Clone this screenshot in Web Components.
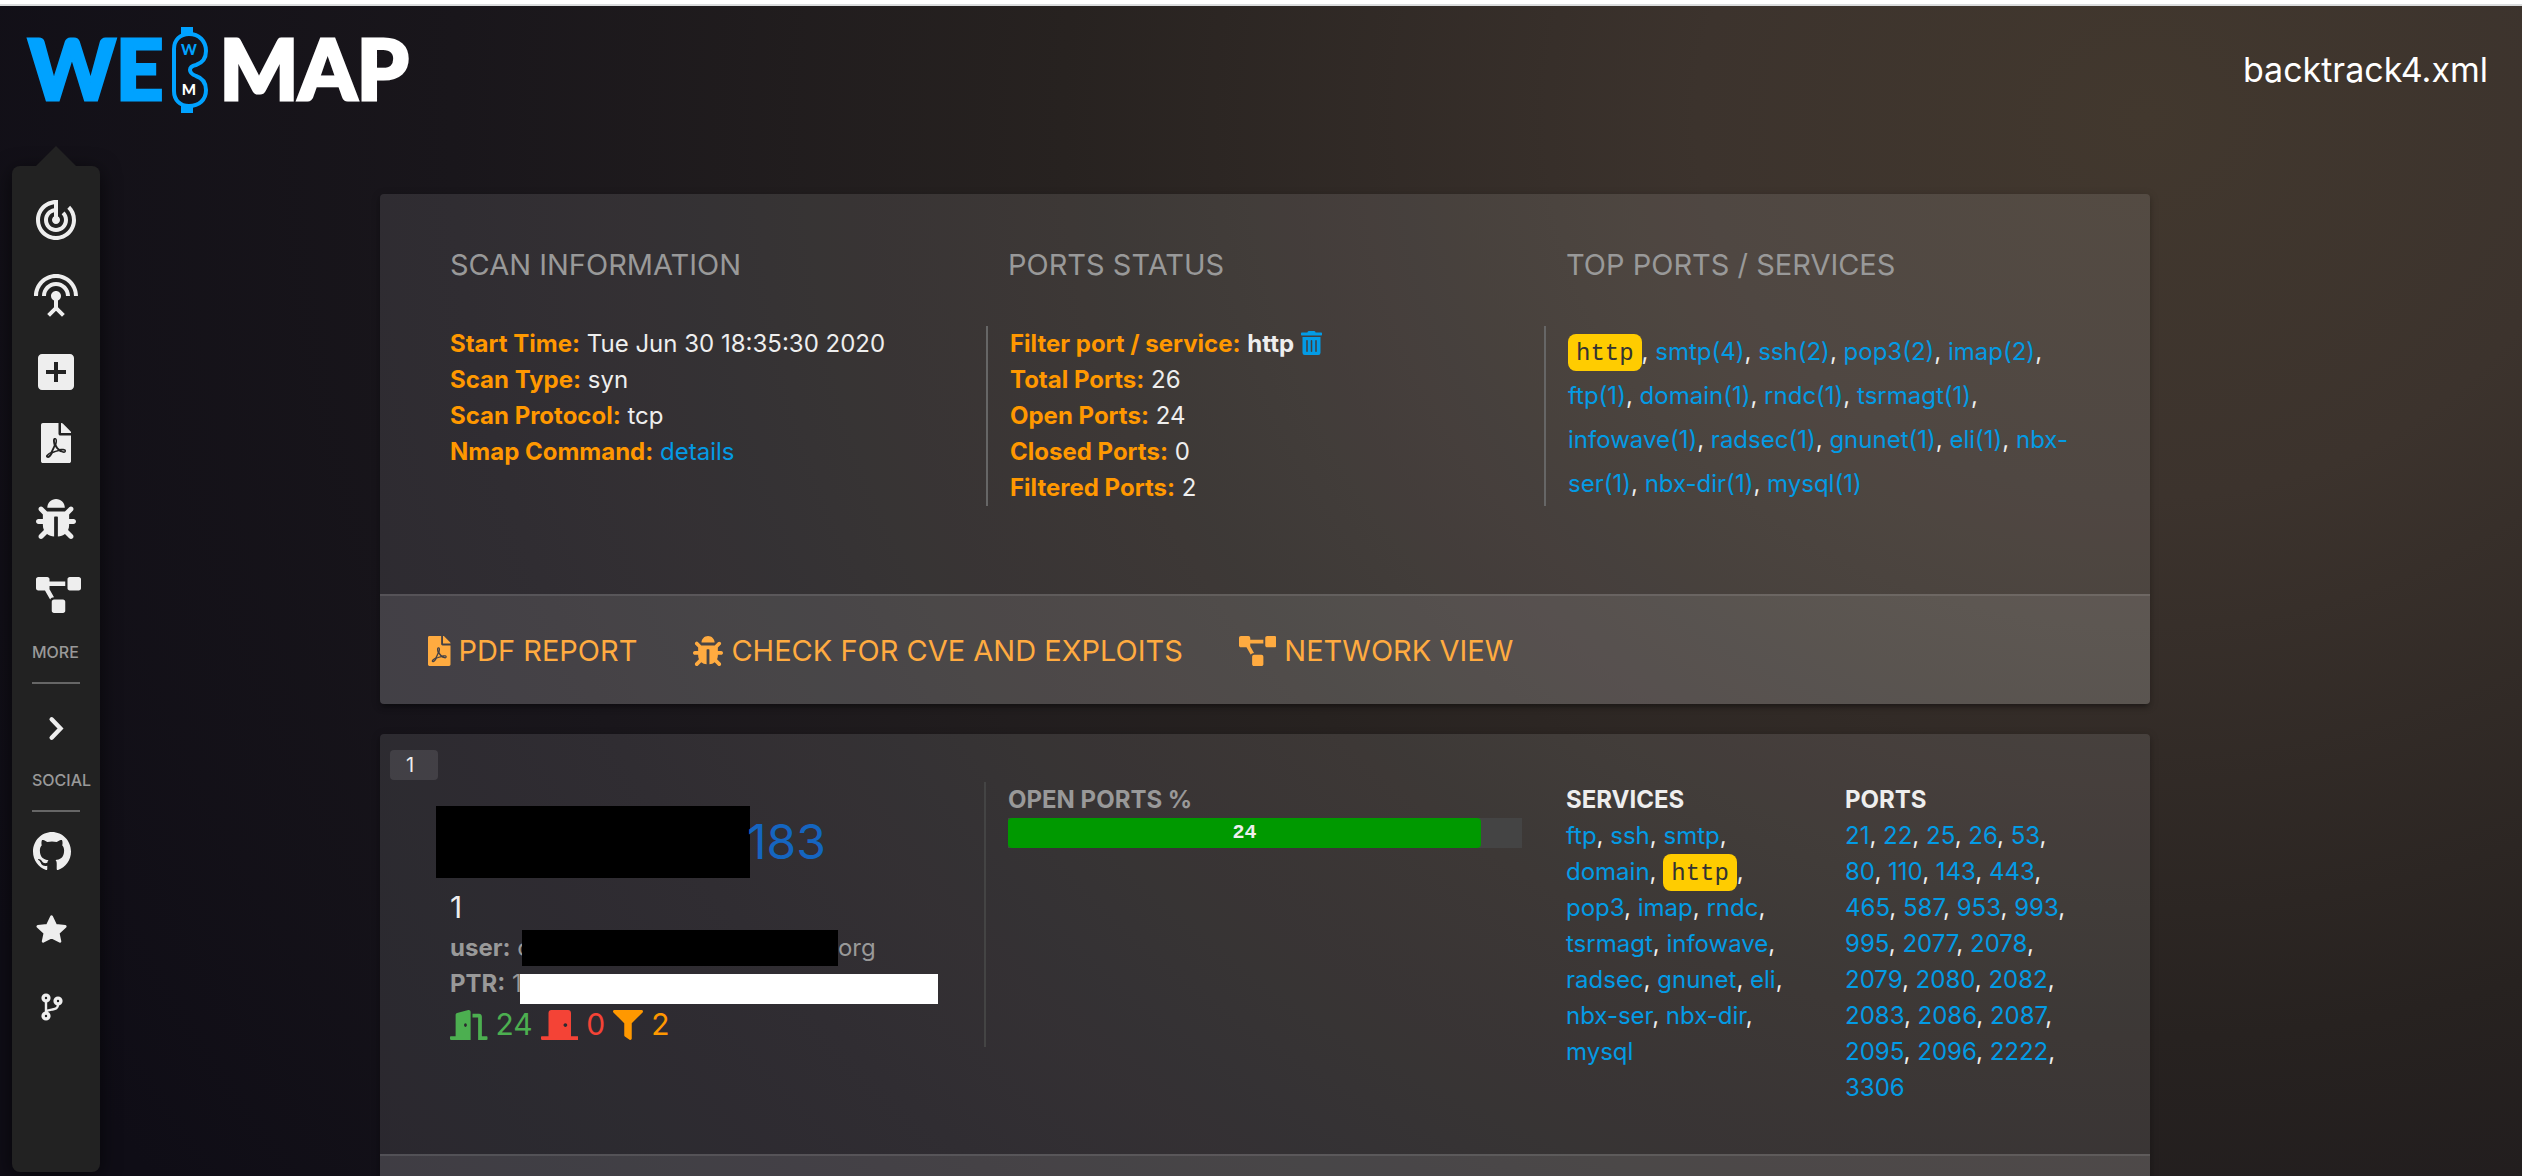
<!DOCTYPE html>
<html lang="en">
<head>
<meta charset="utf-8">
<title>WebMap</title>
<style>
  html, body { margin: 0; }
  body {
    height: 100vh; overflow: hidden;
    font: 24px/36px Inter, "Liberation Sans", sans-serif; color: #eee;
    --link: #039be5; --muted: #999; --accent: #ff9800; --action: #ffab40;
    --veil: rgba(255,255,255,.1);
  }
</style>
</head>
<body>
<wm-app></wm-app>
<script>
const ICONS = {
  track: ['0 0 24 24', '<path d="M19.07 4.93l-1.41 1.41C19.1 7.79 20 9.79 20 12c0 4.42-3.58 8-8 8s-8-3.58-8-8c0-4.08 3.05-7.44 7-7.93v2.02C8.16 6.57 6 9.03 6 12c0 3.31 2.69 6 6 6s6-2.69 6-6c0-1.66-.67-3.16-1.76-4.24l-1.41 1.41C15.55 9.9 16 10.9 16 12c0 2.21-1.79 4-4 4s-4-1.79-4-4c0-1.86 1.28-3.41 3-3.86v2.14c-.6.35-1 .98-1 1.72 0 1.1.9 2 2 2s2-.9 2-2c0-.74-.4-1.38-1-1.72V2h-1C6.48 2 2 6.48 2 12s4.48 10 10 10 10-4.48 10-10c0-2.76-1.12-5.26-2.93-7.07z"/>'],
  antenna: ['0 0 24 24', '<path d="M12 5c-3.87 0-7 3.13-7 7h2c0-2.76 2.24-5 5-5s5 2.24 5 5h2c0-3.87-3.13-7-7-7zm1 9.29c.88-.39 1.5-1.26 1.5-2.29 0-1.38-1.12-2.5-2.5-2.5S9.5 10.62 9.5 12c0 1.02.62 1.9 1.5 2.29v3.3L7.59 21 9 22.41l3-3 3 3L16.41 21 13 17.59v-3.3zM12 1C5.93 1 1 5.93 1 12h2c0-4.97 4.03-9 9-9s9 4.03 9 9h2c0-6.07-4.93-11-11-11z"/>'],
  add: ['0 0 24 24', '<path d="M19 3H5c-1.11 0-2 .9-2 2v14c0 1.1.89 2 2 2h14c1.1 0 2-.9 2-2V5c0-1.1-.9-2-2-2zm-2 10h-4v4h-2v-4H7v-2h4V7h2v4h4v2z"/>'],
  pdf: ['0 0 384 512', '<path d="M181.9 256.1c-5-16-4.9-46.9-2-46.9 8.4 0 7.6 36.9 2 46.9zm-1.7 47.2c-7.7 20.2-17.3 43.3-28.4 62.7 18.3-7 39-17.2 62.9-21.9-12.7-9.6-24.9-23.4-34.5-40.8zM86.1 428.1c0 .8 13.2-5.4 34.9-40.2-6.7 6.3-29.1 24.5-34.9 40.2zM248 160h136v328c0 13.3-10.7 24-24 24H24c-13.3 0-24-10.7-24-24V24C0 10.7 10.7 0 24 0h200v136c0 13.2 10.8 24 24 24zm-8 171.8c-20-12.2-33.3-29-42.7-53.8 4.5-18.5 11.6-46.6 6.2-64.2-4.7-29.4-42.4-26.5-47.8-6.8-5 18.3-.4 44.1 8.1 77-11.6 27.6-28.7 64.6-40.8 85.8-.1 0-.1.1-.2.1-27.1 13.9-73.6 44.5-54.5 68 5.6 6.9 16 10 21.5 10 17.9 0 35.7-18 61.1-61.8 25.8-8.5 54.1-19.1 79-23.2 21.7 11.8 47.1 19.5 64 19.5 29.2 0 31.2-32 19.7-43.4-13.9-13.6-54.3-9.7-73.6-7.2zM377 105L279 7c-4.5-4.5-10.6-7-17-7h-6v128h128v-6.1c0-6.3-2.5-12.4-7-16.9zm-74.1 255.3c4.1-2.7-2.5-11.9-42.8-9 37.1 15.8 42.8 9 42.8 9z"/>'],
  bug: ['0 0 512 512', '<path d="M511.988 288.9c-.478 17.43-15.217 31.1-32.653 31.1H424v16c0 21.864-4.882 42.584-13.6 61.145l60.228 60.228c12.496 12.497 12.496 32.758 0 45.255-12.498 12.497-32.759 12.496-45.256 0l-54.736-54.736C345.886 467.965 314.351 480 280 480V236c0-6.627-5.373-12-12-12h-24c-6.627 0-12 5.373-12 12v244c-34.351 0-65.886-12.035-90.636-32.108l-54.736 54.736c-12.498 12.497-32.759 12.496-45.256 0-12.496-12.497-12.496-32.758 0-45.255l60.228-60.228C92.882 378.584 88 357.864 88 336v-16H32.666C15.23 320 .491 306.33.013 288.9-.484 270.816 14.028 256 32 256h56v-58.745l-46.628-46.628c-12.496-12.497-12.496-32.758 0-45.255 12.498-12.497 32.758-12.497 45.256 0L141.255 160h229.489l54.627-54.627c12.498-12.497 32.758-12.497 45.256 0 12.496 12.497 12.496 32.758 0 45.255L424 197.255V256h56c17.972 0 32.484 14.816 31.988 32.9zM257 0c-61.856 0-112 50.144-112 112h224C369 50.144 318.856 0 257 0z"/>'],
  diagram: ['0 0 640 512', '<path d="M384 320H256c-17.67 0-32 14.33-32 32v128c0 17.67 14.33 32 32 32h128c17.67 0 32-14.33 32-32V352c0-17.67-14.33-32-32-32zM192 32c0-17.67-14.33-32-32-32H32C14.33 0 0 14.33 0 32v128c0 17.67 14.33 32 32 32h95.72l73.16 128.04C211.98 300.98 232.4 288 256 288h.28L192 175.51V128h224V64H192V32zM608 0H480c-17.67 0-32 14.33-32 32v128c0 17.67 14.33 32 32 32h128c17.67 0 32-14.33 32-32V32c0-17.67-14.33-32-32-32z"/>'],
  chevron: ['0 0 16 24', '<path d="M3.5 3.2L12 12l-8.500 8.800" fill="none" stroke="currentColor" stroke-width="4.200" stroke-linecap="round"/>'],
  github: ['32 32 448 448', '<path d="M256 32C132.300 32 32 134.900 32 261.700c0 101.500 64.200 187.500 153.200 217.900a17.560 17.560 0 003.800.4c8.300 0 11.500-6.100 11.500-11.400 0-5.500-.2-19.900-.3-39.100a102.400 102.400 0 01-22.600 2.700c-43.100 0-52.900-33.500-52.900-33.500-10.200-26.500-24.900-33.600-24.900-33.600-19.500-13.700-.1-14.100 1.400-14.100h.1c22.500 2 34.300 23.800 34.300 23.800 11.200 19.600 26.200 25.100 39.600 25.100a63 63 0 0025.600-6c2-14.800 7.800-24.900 14.200-30.700-49.700-5.800-102-25.500-102-113.500 0-25.100 8.700-45.600 23-61.600-2.300-5.800-10-29.200 2.200-60.800a18.640 18.640 0 015-.5c8.100 0 26.400 3.100 56.600 24.100a208.210 208.210 0 01112.200 0c30.200-21 48.500-24.100 56.600-24.100a18.640 18.640 0 015 .5c12.200 31.600 4.500 55 2.200 60.800 14.300 16.100 23 36.600 23 61.600 0 88.200-52.400 107.600-102.300 113.300 8 7.100 15.200 21.100 15.200 42.500 0 30.700-.3 55.500-.3 63 0 5.400 3.100 11.500 11.400 11.500a19.350 19.350 0 004-.4C415.900 449.200 480 363.100 480 261.700 480 134.900 379.700 32 256 32z"/>'],
  star: ['0 0 30 27', '<path d="M15 1.600l4 8.300 9.200 1.100-6.800 6.400 1.700 8-8.100-4.100-8.100 4.100 1.700-8L1.800 11l9.200-1.100z" stroke="currentColor" stroke-width="2.600" stroke-linejoin="round"/>'],
  branch: ['0 0 22 28', '<g fill="none" stroke="currentColor" stroke-width="3.400"><circle cx="5" cy="5" r="2.900"/><circle cx="5" cy="23" r="2.900"/><circle cx="17" cy="8" r="2.900"/></g><path d="M5 8v12M17 11.500c0 4-2.500 4.500-5.500 5S6 17.300 5 18.500" fill="none" stroke="currentColor" stroke-width="2.400"/>'],
  trash: ['0 0 448 512', '<path d="M32 464a48 48 0 0 0 48 48h288a48 48 0 0 0 48-48V128H32zm272-256a16 16 0 0 1 32 0v224a16 16 0 0 1-32 0zm-96 0a16 16 0 0 1 32 0v224a16 16 0 0 1-32 0zm-96 0a16 16 0 0 1 32 0v224a16 16 0 0 1-32 0zM432 32H312l-9.400-18.700A24 24 0 0 0 281.100 0H166.800a23.720 23.720 0 0 0-21.400 13.300L136 32H16A16 16 0 0 0 0 48v32a16 16 0 0 0 16 16h416a16 16 0 0 0 16-16V48a16 16 0 0 0-16-16z"/>'],
  open: ['0 0 640 512', '<path d="M624 448h-80V113.450C544 86.190 522.470 64 496 64H384v64h96v384h144c8.840 0 16-7.160 16-16v-32c0-8.840-7.160-16-16-16zM312.240 1.010l-192 49.740C105.990 54.440 96 67.700 96 82.920V448H16c-8.840 0-16 7.160-16 16v32c0 8.840 7.160 16 16 16h336V33.180c0-21.580-19.560-37.410-39.760-32.170zM264 288c-13.250 0-24-14.330-24-32s10.750-32 24-32 24 14.330 24 32-10.750 32-24 32z"/>'],
  closed: ['0 0 640 512', '<path d="M624 448H512V50.800C512 22.780 490.470 0 464 0H175.990c-26.470 0-48 22.780-48 50.800V448H16c-8.840 0-16 7.160-16 16v32c0 8.840 7.160 16 16 16h608c8.840 0 16-7.160 16-16v-32c0-8.840-7.160-16-16-16zM415.990 288c-17.670 0-32-14.330-32-32s14.330-32 32-32 32 14.330 32 32c.01 17.670-14.320 32-32 32z"/>'],
  filter: ['0 0 512 512', '<path d="M487.976 0H24.028C2.710 0-8.047 25.866 7.058 40.971L192 225.941V432c0 7.831 3.821 15.170 10.237 19.662l80 55.980C298.020 518.690 320 507.493 320 487.980V225.941l184.947-184.970C520.021 25.896 509.338 0 487.976 0z"/>']
};

const define = (name, render) => customElements.define(name, class extends HTMLElement {
  connectedCallback() {
    if (this.shadowRoot) return;
    this.attachShadow({ mode: 'open' }).innerHTML = render(this);
  }
});

define('wm-icon', el => {
  const [box, body] = ICONS[el.getAttribute('name')];
  return `<style>
    :host { display: inline-block; line-height: 0; flex: none; }
    svg { display: block; height: ${el.getAttribute('size')}px; fill: currentColor; }
  </style><svg viewBox="${box}" aria-hidden="true">${body}</svg>`;
});

define('wm-logo', () => `<style>
    :host { display: flex; align-items: flex-start; height: 86px; font: 900 83px/82px "Lato Black", Lato, sans-serif; color: #fff; }
    span { -webkit-text-stroke: 3px currentColor; }
    .web { color: #00a2ff; }
    svg { height: 86px; margin: 0 11px 0 9px; }
    text { font: 900 15px "Lato Black", Lato, sans-serif; text-anchor: middle; }
  </style>
  <span class="web">WE</span>
  <svg viewBox="0 0 36 86" aria-hidden="true">
    <path d="M9 0h12v8H9zM9 78h12v8H9z" fill="#00a2ff"/>
    <path d="M2 22C2 13 8 7 17 7c10 0 17 7 17 17 0 7-4 12-10 14-5 1-6 3-6 5s1 4 6 6c6 2 10 7 10 14 0 10-7 16-17 16C8 79 2 73 2 64z" fill="none" stroke="#00a2ff" stroke-width="4"/>
    <text x="17" y="28" fill="#00a2ff">W</text>
    <text x="17" y="68" fill="#fff">M</text>
  </svg>
  <span>MAP</span>`);

define('wm-header', () => `<style>
    :host { display: flex; justify-content: space-between; align-items: center;
      box-sizing: border-box; height: 146px; padding: 0 34px 10px 28px;
      border-top: 4px solid #fff; box-shadow: inset 0 2px #dadcdd; }
    h1 { margin: 0; font-size: 34px; line-height: 36px; font-weight: 400; color: #fff; }
  </style><wm-logo></wm-logo><h1><slot></slot></h1>`);

define('wm-sidebar', () => `<style>
    :host { display: flex; flex-direction: column; position: relative; width: 88px; box-sizing: border-box;
      margin: 20px 0 4px 12px; padding-top: 16px; background: #222; border-radius: 8px;
      box-shadow: 0 4px 20px rgba(0,0,0,.6); color: #eee; }
    :host::before { content: ""; position: absolute; left: 24px; top: -20px;
      border: 20px solid transparent; border-top: 0; border-bottom-color: #222; }
    nav { display: flex; flex-direction: column; }
    a { display: flex; align-items: center; justify-content: center; height: 76px; color: inherit; }
    .tools { margin-top: -5px; }
    .tools a:last-child { padding-left: 5px; }
    .more { padding-top: 11px; }
    .more a { height: 66px; }
    .social { padding-right: 8px; }
    .social a { height: 78px; }
    h2 { margin: 2px 20px 0; font-size: 16px; line-height: 34px; font-weight: 500; color: var(--muted); }
    hr { margin: 13px 20px 0; border: 0; height: 2px; background: #666; }
  </style>
  <nav>
    <a href="#" aria-label="Scans"><wm-icon name="track" size="48"></wm-icon></a>
    <a href="#" aria-label="Hosts"><wm-icon name="antenna" size="48"></wm-icon></a>
    <a href="#" aria-label="New scan"><wm-icon name="add" size="48"></wm-icon></a>
  </nav>
  <nav class="tools">
    <a href="#" aria-label="PDF report"><wm-icon name="pdf" size="40"></wm-icon></a>
    <a href="#" aria-label="Check CVE"><wm-icon name="bug" size="40"></wm-icon></a>
    <a href="#" aria-label="Network view"><wm-icon name="diagram" size="36"></wm-icon></a>
  </nav>
  <h2>MORE</h2><hr>
  <nav class="more"><a href="#" aria-label="Expand"><wm-icon name="chevron" size="25"></wm-icon></a></nav>
  <h2>SOCIAL</h2><hr>
  <nav class="social">
    <a href="#" aria-label="GitHub"><wm-icon name="github" size="38"></wm-icon></a>
    <a href="#" aria-label="Star"><wm-icon name="star" size="28"></wm-icon></a>
    <a href="#" aria-label="Fork"><wm-icon name="branch" size="28"></wm-icon></a>
  </nav>`);

define('wm-card', () => `<style>
    :host { display: block; position: relative; background: var(--veil); border-radius: 4px;
      box-shadow: 0 4px 4px rgba(0,0,0,.14), 0 6px 2px -4px rgba(0,0,0,.12), 0 2px 10px rgba(0,0,0,.2); }
    .content { display: grid; grid-template-columns: repeat(6, 1fr); padding: 48px; }
    footer { display: flex; gap: 56px; box-sizing: border-box; min-height: 110px; padding: 33px 48px 31px;
      border-top: 2px solid var(--veil); background: var(--veil); border-radius: 0 0 4px 4px; }
  </style>
  <slot name="badge"></slot>
  <div class="content"><slot></slot></div>
  <footer><slot name="action"></slot></footer>`);

define('wm-action', el => `<style>
    :host { display: block; }
    a { display: flex; align-items: center; gap: 8px; color: var(--action); text-decoration: none;
      font-size: 29px; line-height: 44px; text-transform: uppercase; white-space: nowrap; }
  </style><a href="#"><wm-icon name="${el.getAttribute('icon')}" size="30"></wm-icon><slot></slot></a>`);

define('wm-panel', el => `<style>
    :host { display: block; grid-column: span 2; }
    h2 { margin: 0 22px 38px; font-size: 29px; line-height: 46px; font-weight: 400; color: var(--muted); }
    div { padding: 0 22px; }
    :host([ruled]) div { border-left: 2px solid #666; }
    :host([spread]) div { line-height: 44px; padding-top: 4px; }
  </style><h2>${el.getAttribute('heading')}</h2><div><slot></slot></div>`);

define('wm-field', el => `<style>
    :host { display: block; }
    b { color: var(--accent); }
  </style><b>${el.getAttribute('label')}:</b> <slot></slot>`);

define('wm-links', el => `<style>
    :host { display: block; }
    a { color: var(--link); text-decoration: none; }
    .on { padding: 6px 8px 4px; border-radius: 8px; background: #fc0; color: #333;
      font-family: "Liberation Mono", monospace; line-height: 24px; }
  </style>${el.getAttribute('items').split(' ').map(t =>
    `<a href="#"${t === 'http' ? ' class="on"' : ''}>${t}</a>`).join(', ')}`);

define('wm-scan', () => `<style>
    :host { display: block; }
    a { color: var(--link); text-decoration: none; }
    wm-icon { vertical-align: -3px; }
    .body { min-height: 304px; }
  </style>
  <wm-card>
    <wm-panel class="body" heading="SCAN INFORMATION">
      <wm-field label="Start Time">Tue Jun 30 18:35:30 2020</wm-field>
      <wm-field label="Scan Type">syn</wm-field>
      <wm-field label="Scan Protocol">tcp</wm-field>
      <wm-field label="Nmap Command"><a href="#">details</a></wm-field>
    </wm-panel>
    <wm-panel ruled heading="PORTS STATUS">
      <wm-field label="Filter port / service"><b>http</b> <a href="#" aria-label="Remove filter"><wm-icon name="trash" size="24"></wm-icon></a></wm-field>
      <wm-field label="Total Ports">26</wm-field>
      <wm-field label="Open Ports">24</wm-field>
      <wm-field label="Closed Ports">0</wm-field>
      <wm-field label="Filtered Ports">2</wm-field>
    </wm-panel>
    <wm-panel ruled spread heading="TOP PORTS / SERVICES">
      <wm-links items="http smtp(4) ssh(2) pop3(2) imap(2) ftp(1) domain(1) rndc(1) tsrmagt(1) infowave(1) radsec(1) gnunet(1) eli(1) nbx-ser(1) nbx-dir(1) mysql(1)"></wm-links>
    </wm-panel>
    <wm-action slot="action" icon="pdf">PDF report</wm-action>
    <wm-action slot="action" icon="bug">Check for CVE and exploits</wm-action>
    <wm-action slot="action" icon="diagram">Network view</wm-action>
  </wm-card>`);

define('wm-meter', el => `<style>
    :host { display: block; color: var(--muted); }
    .track { height: 30px; background: #444; }
    .fill { width: ${el.getAttribute('percent')}%; height: 30px; border-radius: 4px; background: #090;
      color: #eee; text-align: center; font: bold 20px/30px "Liberation Mono", monospace; }
  </style><b><slot></slot></b><div class="track"><div class="fill">${el.getAttribute('value')}</div></div>`);

define('wm-host', () => `<style>
    :host { display: block; }
    .badge { position: absolute; left: 10px; top: 16px; box-sizing: border-box; width: 48px; padding-left: 16px;
      border-radius: 4px; background: var(--veil); font-size: 20px; line-height: 30px; }
    .who { grid-column: span 2; align-self: start; box-sizing: border-box; padding: 24px 22px 0; border-right: 2px solid #444; }
    .half { grid-column: span 2; padding: 0 22px; }
    .col { padding: 0 22px; min-height: 324px; }
    .row { display: flex; color: var(--muted); white-space: pre; }
    .address { align-items: center; margin: 0 0 7px -14px; height: 72px; font-size: 48px; }
    .address a { margin-left: -3px; color: #1565c0; text-decoration: none; }
    .count { font-size: 30px; line-height: 45px; }
    .mask { background: #000; }
    .m1 { width: 314px; height: 72px; }
    .m2 { width: 316px; height: 36px; margin-left: -9px; }
    .m3 { width: 418px; height: 30px; background: #fff; align-self: flex-end; margin: 0 0 -2px -2px; }
    .totals { align-items: center; gap: 8px; }
  </style>
  <wm-card>
    <span class="badge" slot="badge">1</span>
    <div class="who">
      <div class="row address"><span class="mask m1"></span><a href="#">183</a></div>
      <div class="count">1</div>
      <div class="row"><b>user:</b> c<span class="mask m2"></span>org</div>
      <div class="row"><b>PTR:</b> 1<span class="mask m3"></span></div>
      <div class="row count totals">
        <wm-icon name="open" size="30" style="color:#4caf50"></wm-icon><span style="color:#4caf50">24</span>
        <wm-icon name="closed" size="30" style="color:#f44336"></wm-icon><span style="color:#f44336">0</span>
        <wm-icon name="filter" size="30" style="color:#ff9800"></wm-icon><span style="color:#ff9800">2</span>
      </div>
    </div>
    <div class="half"><wm-meter percent="92" value="24">OPEN PORTS %</wm-meter></div>
    <div class="col"><b>SERVICES</b>
      <wm-links items="ftp ssh smtp domain http pop3 imap rndc tsrmagt infowave radsec gnunet eli nbx-ser nbx-dir mysql"></wm-links></div>
    <div class="col"><b>PORTS</b>
      <wm-links items="21 22 25 26 53 80 110 143 443 465 587 953 993 995 2077 2078 2079 2080 2082 2083 2086 2087 2095 2096 2222 3306"></wm-links></div>
  </wm-card>`);

define('wm-app', () => `<style>
    :host { display: flex; flex-direction: column; height: 100vh; overflow: hidden;
      background: radial-gradient(ellipse 2350px 2000px at 85% 10%, #42382e 0, #3c332d 19%, #272220 46%, #19161b 72%, #0f0d16 100%); }
    .page { display: flex; flex: 1; min-height: 0; }
    main { display: flex; flex-direction: column; gap: 30px; flex: 1; min-width: 0; padding: 48px 372px 0 280px; }
  </style>
  <wm-header>backtrack4.xml</wm-header>
  <div class="page">
    <wm-sidebar></wm-sidebar>
    <main><wm-scan></wm-scan><wm-host></wm-host></main>
  </div>`);
</script>
</body>
</html>
